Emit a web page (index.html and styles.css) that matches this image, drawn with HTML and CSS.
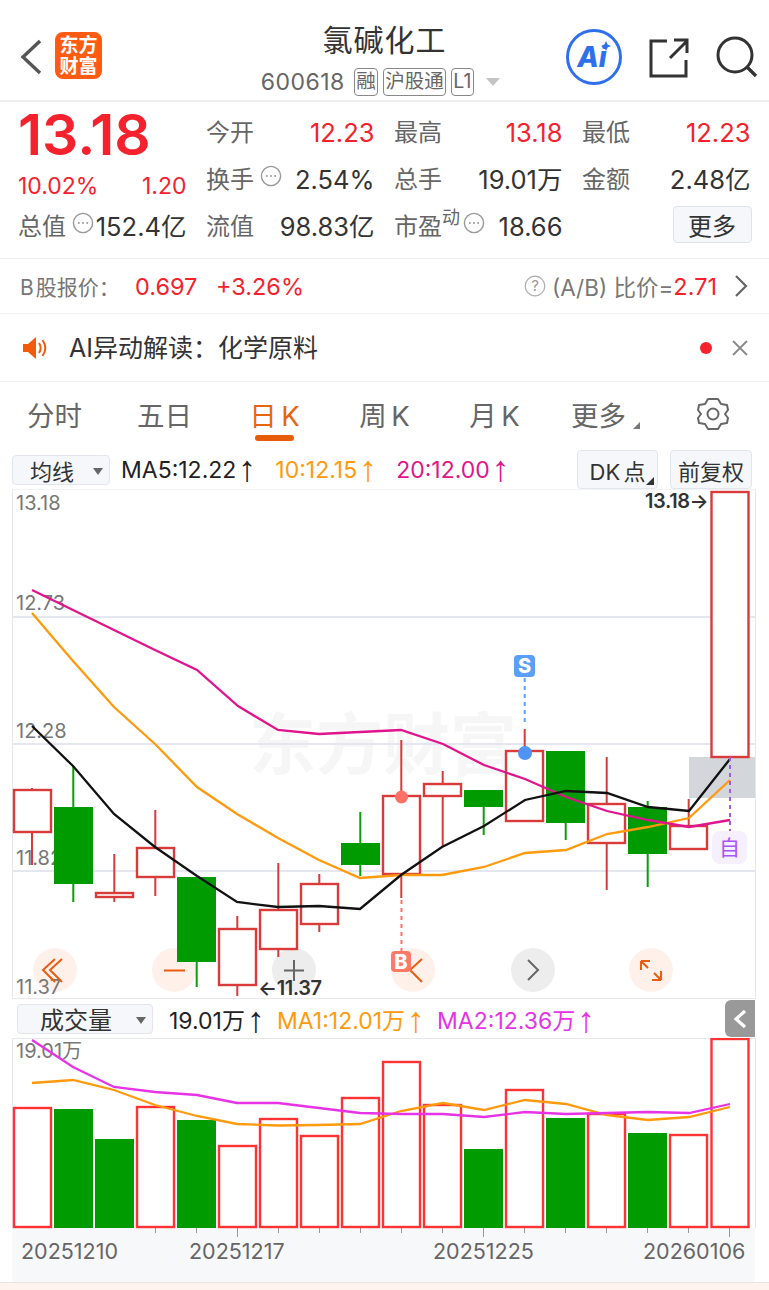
FILE: index.html
```html
<!DOCTYPE html>
<html lang="zh">
<head>
<meta charset="utf-8">
<title>氯碱化工</title>
<link rel="stylesheet" href="styles.css">
</head>
<body>
<svg class="defs" width="0" height="0">
  <symbol id="more" viewBox="0 0 22 22">
    <circle cx="11" cy="11" r="9.6" fill="none" stroke="#999" stroke-width="1.4"/>
    <circle cx="6.8" cy="11" r="1" fill="#999"/><circle cx="11" cy="11" r="1" fill="#999"/><circle cx="15.2" cy="11" r="1" fill="#999"/>
  </symbol>
</svg>
<div class="page">
  <header class="header">
    <div class="header-left">
      <svg class="back" viewBox="0 0 22 36"><path d="M20 2 3 18l17 16" fill="none" stroke="#555" stroke-width="3.4"/></svg>
      <div class="logo"><span>东方</span><span>财富</span></div>
    </div>
    <div class="header-center">
      <div class="title">氯碱化工</div>
      <div class="subtitle">
        <span class="code">600618</span>
        <span class="tag">融</span><span class="tag">沪股通</span><span class="tag">L1</span>
        <span class="caret"></span>
      </div>
    </div>
    <div class="header-right">
      <svg class="ai" viewBox="0 0 58 58">
        <circle cx="29" cy="29" r="26.5" fill="none" stroke="#2f6fee" stroke-width="3"/>
        <text x="27" y="39" class="ai-text">Ai</text>
        <path d="M41 13l1.6 3.4L46 18l-3.4 1.6L41 23l-1.6-3.4L36 18l3.4-1.6z" fill="#2f6fee"/>
      </svg>
      <svg class="share" viewBox="0 0 40 40"><path d="M18 3H2v35h35V22M21 20 38 3M25 2h13v13" fill="none" stroke="#333" stroke-width="3"/></svg>
      <svg class="search" viewBox="0 0 42 42"><circle cx="19" cy="19" r="17" fill="none" stroke="#333" stroke-width="3"/><path d="M31 31l9 9" stroke="#333" stroke-width="3.4"/></svg>
    </div>
  </header>

  <section class="quote">
    <div class="price">13.18</div>
    <div class="cell"><span class="lbl">今开</span><span class="up">12.23</span></div>
    <div class="cell"><span class="lbl">最高</span><span class="up">13.18</span></div>
    <div class="cell"><span class="lbl">最低</span><span class="up">12.23</span></div>
    <div class="cell change"><span class="up">10.02%</span><span class="up">1.20</span></div>
    <div class="cell"><span class="lbl">换手<svg class="more"><use href="#more"/></svg></span><span class="val">2.54%</span></div>
    <div class="cell"><span class="lbl">总手</span><span class="val">19.01万</span></div>
    <div class="cell"><span class="lbl">金额</span><span class="val">2.48亿</span></div>
    <div class="cell"><span class="lbl">总值<svg class="more tight"><use href="#more"/></svg></span><span class="val">152.4亿</span></div>
    <div class="cell"><span class="lbl">流值</span><span class="val">98.83亿</span></div>
    <div class="cell"><span class="lbl">市盈<sup class="dyn">动</sup><svg class="more after-dyn"><use href="#more"/></svg></span><span class="val">18.66</span></div>
    <div class="cell end"><button class="more-btn">更多</button></div>
  </section>

  <section class="bshare">
    <span class="b-label">B 股报价&#xFF1A;</span>
    <span class="up b-price">0.697</span>
    <span class="up b-pct">+3.26%</span>
    <span class="b-right">
      <svg class="help" viewBox="0 0 22 22"><circle cx="11" cy="11" r="9.8" fill="none" stroke="#aaa" stroke-width="1.2"/><text x="11" y="16" class="help-text">?</text></svg>
      <span class="b-ratio">(A/B) 比价=</span><span class="up">2.71</span>
      <svg class="chev" viewBox="0 0 15 24"><path d="M2 2l10 10L2 22" fill="none" stroke="#666" stroke-width="2.2"/></svg>
    </span>
  </section>

  <section class="airow">
    <svg class="speaker" viewBox="0 0 26 24"><path d="M1 8h5l8-7v22l-8-7H1z" fill="#f25a0e"/><path d="M17 7c2 3 2 7 0 10M20.500 4c3.500 5 3.500 11 0 16" fill="none" stroke="#f25a0e" stroke-width="2"/></svg>
    <span class="ai-line">AI异动解读&#xFF1A;化学原料</span>
    <span class="dot"></span>
    <svg class="close" viewBox="0 0 16 16"><path d="M1 1l14 14M15 1 1 15" stroke="#888" stroke-width="1.8"/></svg>
  </section>

  <nav class="tabs">
    <span class="tab">分时</span>
    <span class="tab">五日</span>
    <span class="tab active">日 K</span>
    <span class="tab">周 K</span>
    <span class="tab">月 K</span>
    <span class="tab tab-more">更多</span>
    <span class="tab"><svg class="gear" viewBox="0 0 32 34"><path d="M11 2h10l3 5 6 1 1 5-3 4 3 4-1 5-6 1-3 5H11l-3-5-6-1-1-5 3-4-3-4 1-5 6-1z" fill="none" stroke="#666" stroke-width="2" stroke-linejoin="round"/><circle cx="16" cy="17" r="5.500" fill="none" stroke="#666" stroke-width="2"/></svg></span>
  </nav>

  <div class="mabar">
    <div class="select select-ma"><span>均线</span><i class="down"></i></div>
    <span class="ma black">MA5:12.22<i class="arrow">↑</i></span>
    <span class="ma orange">10:12.15<i class="arrow">↑</i></span>
    <span class="ma pink">20:12.00<i class="arrow">↑</i></span>
    <div class="opt opt-dk">DK 点<i class="corner"></i></div>
    <div class="opt opt-fq">前复权</div>
  </div>

  <svg class="kchart" viewBox="0 489 769 510" width="769" height="510">
    <text x="249" y="769" class="watermark">东方财富</text>
    <path class="frame" d="M12.500 489V998.500H755.500V489H12.500"/>
    <path class="grid" d="M13 617H755M13 744H755M13 871H755"/>
    <rect x="689" y="757" width="66" height="41" fill="#d3d6da"/>
    <g class="circles">
      <circle cx="55" cy="970" r="22" class="c-o"/><circle cx="174" cy="970" r="22" class="c-o"/><circle cx="294" cy="970" r="22" class="c-g"/>
      <circle cx="413" cy="970" r="22" class="c-o"/><circle cx="533" cy="970" r="22" class="c-g"/><circle cx="651" cy="970" r="22" class="c-o"/>
    </g>
    <g class="axis-labels">
      <text x="16" y="510">13.18</text><text x="16" y="610">12.73</text><text x="16" y="738">12.28</text><text x="16" y="865">11.82</text><text x="16" y="994">11.37</text>
    </g>
    <path class="wick-r" d="M32 788V865M114.300 854V902M155.300 810V896M237.300 916V996M278.300 863V957M319.300 874V932M401.300 740V898M442.700 771V847M524.700 729V751M606.700 757V890M688.700 799V826"/>
    <path class="wick-g" d="M73.300 766V902M196.700 877V987M360.300 812V876M483.700 807V835M565.700 823V840M647.700 801V887"/>
    <g class="body-r">
      <rect x="14" y="790" width="37" height="42"/><rect x="96" y="893" width="37" height="4"/><rect x="137" y="848" width="37" height="29"/>
      <rect x="219" y="929" width="37" height="56"/><rect x="260" y="910" width="37" height="39"/><rect x="301" y="884" width="37" height="40"/>
      <rect x="383" y="796" width="37" height="78"/><rect x="424" y="784" width="37" height="12"/><rect x="506" y="751" width="37" height="70"/>
      <rect x="588" y="804" width="37" height="39"/><rect x="670" y="826" width="37" height="23"/><rect x="711.500" y="492" width="37" height="265"/>
    </g>
    <g class="body-g">
      <rect x="54" y="807" width="39" height="77"/><rect x="177" y="877" width="39" height="85"/><rect x="341" y="843" width="39" height="22"/>
      <rect x="464" y="790" width="39" height="17"/><rect x="546" y="751" width="39" height="72"/><rect x="628" y="807" width="39" height="47"/>
    </g>
    <polyline class="l-orange" points="32,613 73,661 114,707 155,744 197,787 237,814 278,838 319,860 360,878 401,875 442,875 484,867 525,853 566,850 607,834 648,827 689,818 730,780"/>
    <polyline class="l-pink" points="32,590 73,610 114,630 155,650 197,670 238,706 278,730 319,734 360,732 401,730 443,744 484,765 525,779 566,797 607,811 648,820 689,827 730,820"/>
    <polyline class="l-black" points="32,726 73,766 114,814 155,847 197,876 237,902 278,907 319,906 360,909 401,875 442,847 484,826 525,800 566,791 607,793 648,807 689,811 730,759"/>
    <g class="btn-icons">
      <path class="i-o" d="M62 959 50 970l12 12M55 959 43 970l12 12M164 970.500h21M422 959l-12 11 12 12"/>
      <path class="i-g" d="M284 970.500h20M294 960v21M528 960l10 10-10 10"/>
      <path class="i-o" d="M641 961h9M641 961v9M641 961l7 7M661 980h-9M661 980v-9M661 980l-7-7"/>
    </g>
    <path class="dash-red" d="M401.500 900V952"/>
    <path class="dash-blue" d="M524.700 678V722"/>
    <path class="dash-purple" d="M730 757V832"/>
    <circle cx="401.500" cy="797" r="6.500" fill="#ff7066"/>
    <circle cx="525" cy="753" r="7" fill="#4f94f5"/>
    <rect x="391" y="951" width="20" height="21" rx="4" fill="#ff7a66"/><text x="401" y="969" class="mark">B</text>
    <rect x="514" y="655" width="21" height="22" rx="4" fill="#5a9ffa"/><text x="524.500" y="673" class="mark">S</text>
    <rect x="712" y="831" width="35" height="33" rx="8" fill="#f5effe"/><text x="729.500" y="855" class="self">自</text>
    <text x="645" y="508" class="hl">13.18→</text>
    <text x="258" y="995" class="hl">←11.37</text>
  </svg>

  <div class="volbar">
    <div class="select select-vol"><span>成交量</span><i class="down"></i></div>
    <span class="ma black">19.01万<i class="arrow">↑</i></span>
    <span class="ma orange">MA1:12.01万<i class="arrow">↑</i></span>
    <span class="ma magenta">MA2:12.36万<i class="arrow">↑</i></span>
    <div class="collapse"><svg viewBox="0 0 14 20"><path d="M12 2 3 10l9 8" fill="none" stroke="#fff" stroke-width="3.200"/></svg></div>
  </div>

  <svg class="volchart" viewBox="0 1038 769 244" width="769" height="244">
    <rect x="12" y="1228" width="743" height="54" fill="#f7f8fa"/>
    <path class="frame" d="M12.500 1228V1038.500H755.500V1228"/>
    <path class="tick" d="M155.500 1228v5M196.500 1228v5M237.500 1228v9M278.500 1228v5M319.500 1228v5M360.500 1228v5M401.500 1228v5M442.500 1228v5M483.500 1228v9M524.500 1228v5M565.500 1228v5M606.500 1228v5M647.500 1228v5M688.500 1228v5M729.500 1228v9"/>
    <g class="vol-r">
      <rect x="14" y="1108" width="37" height="119"/><rect x="137" y="1107" width="37" height="120"/><rect x="219" y="1146" width="37" height="81"/>
      <rect x="260" y="1119" width="37" height="108"/><rect x="301" y="1136" width="37" height="91"/><rect x="342" y="1098" width="37" height="129"/>
      <rect x="383" y="1062" width="37" height="165"/><rect x="424" y="1105" width="37" height="122"/><rect x="506" y="1090" width="37" height="137"/>
      <rect x="588" y="1114" width="37" height="113"/><rect x="670" y="1135" width="37" height="92"/><rect x="711.500" y="1039" width="37" height="188"/>
    </g>
    <g class="body-g">
      <rect x="54" y="1109" width="39" height="119"/><rect x="95" y="1139" width="39" height="89"/><rect x="177" y="1120" width="39" height="108"/>
      <rect x="464" y="1149" width="39" height="79"/><rect x="546" y="1118" width="39" height="110"/><rect x="628" y="1133" width="39" height="95"/>
    </g>
    <text x="16" y="1058" class="vol-label">19.01万</text>
    <polyline class="l-orange" points="32,1083 73,1080 114,1090 155,1105 197,1116 237,1124 278,1125.500 319,1125 360,1124 401,1111 443,1103 484,1110 525,1100 566,1104 607,1115 648,1120 689,1117 730,1107"/>
    <polyline class="l-magenta" points="32,1040 73,1067 114,1087 155,1092 197,1095 237,1103 278,1103 319,1108 360,1113 401,1114 443,1114 484,1117 525,1112 566,1114 607,1113 648,1112 689,1113 730,1104"/>
    <g class="dates">
      <text x="21" y="1259">20251210</text><text x="189" y="1259">20251217</text><text x="433" y="1259">20251225</text><text x="643" y="1259">20260106</text>
    </g>
  </svg>
  <div class="foot"></div>
</div>
</body>
</html>
```
FILE: styles.css
```css
* { box-sizing: border-box; }
html, body { margin: 0; padding: 0; background: #fff; }
body { font-family: Inter, "Noto Sans CJK SC", sans-serif; color: #333; overflow: hidden; }
.defs { position: absolute; }
.page { width: 769px; height: 1290px; overflow: hidden; }
svg { display: block; }

.header { height: 102px; display: grid; grid-template-columns: 1fr auto 1fr; border-bottom: 2px solid #eee; }
.header-left { display: flex; align-items: flex-start; padding: 39px 0 0 20px; gap: 13px; }
.back { width: 22px; height: 36px; }
.logo { width: 47px; height: 47px; margin-top: -7px; border-radius: 8px; background: #ff5b12; color: #fff; font-size: 19px; font-weight: 700; line-height: 21px; display: flex; flex-direction: column; align-items: center; justify-content: center; }
.header-center { display: flex; flex-direction: column; align-items: center; padding-top: 20px; }
.title { font-size: 30px; line-height: 40px; color: #333; letter-spacing: 1px; }
.subtitle { display: flex; align-items: center; margin-top: 7px; height: 30px; padding-right: 8px; }
.code { font-size: 23px; color: #666; margin-right: 9px; letter-spacing: .5px; }
.tag { height: 28px; padding: 0 1.500px; margin-right: 4.500px; border: 1px solid #888; border-radius: 4px; font-size: 19.500px; line-height: 25px; color: #666; }
.caret { width: 0; height: 0; margin-left: 8px; border: 7px solid transparent; border-top: 8px solid #c4c4c4; border-bottom: 0; }
.header-right { display: flex; align-items: flex-start; justify-content: flex-end; padding: 28px 11px 0 0; }
.ai { width: 58px; height: 58px; }
.ai-text { font-family: Inter, sans-serif; font-size: 28px; font-weight: 800; font-style: italic; fill: #2f6fee; text-anchor: middle; }
.share { width: 40px; height: 40px; margin: 10px 0 0 26px; }
.search { width: 42px; height: 42px; margin: 8px 0 0 27px; }

.quote { height: 157px; padding: 7px 0 0 18px; display: grid; grid-template-columns: repeat(4, 168.500px); grid-auto-rows: 47px; column-gap: 19.500px; border-bottom: 1px solid #eee; }
.price { font-size: 57px; line-height: 47px; padding-top: 2px; font-weight: 600; color: #f5222d; white-space: nowrap; }
.cell { display: flex; justify-content: space-between; align-items: center; font-size: 25.500px; line-height: 30px; }
.cell.change { font-size: 23px; padding-top: 13px; }
.cell.end { justify-content: flex-end; }
.lbl { color: #666; display: flex; align-items: flex-start; font-size: 24px; }
.val { color: #333; white-space: nowrap; height: 30px; }
.up { color: #f5222d; }
.more { width: 22px; height: 22px; margin: 0 0 0 6px; flex: none; }
.more.tight { margin-right: -8px; }
.dyn { font-size: 18px; line-height: 18px; margin: -3px 0 0 0; vertical-align: baseline; }
.more.after-dyn { margin: 0 0 0 3px; }
.more-btn { width: 79px; height: 37px; margin: -5px -1px 0 0; border: 1px solid #dfe3e8; border-radius: 4px; background: #f5f7fa; color: #333; font-family: inherit; font-size: 24px; padding: 0; }

.bshare { height: 55px; display: flex; align-items: center; padding: 0 20px; font-size: 23.500px; border-bottom: 1px solid #f0f0f0; }
.b-label { color: #777; width: 115px; white-space: nowrap; font-size: 21px; word-spacing: -4px; }
.b-price { width: 81px; }
.b-right { margin-left: auto; display: flex; align-items: center; color: #777; }
.help { width: 22px; height: 22px; margin-right: 6px; }
.help-text { font-size: 15px; fill: #999; text-anchor: middle; }
.chev { width: 15px; height: 24px; margin-left: 17px; }
.b-ratio { white-space: nowrap; font-size: 22.500px; }

.airow { height: 68px; display: flex; align-items: center; padding: 0 21px 0 22px; font-size: 25px; color: #333; border-bottom: 1px solid #f0f0f0; }
.speaker { width: 26px; height: 24px; }
.ai-line { margin-left: 21px; padding-bottom: 3px; white-space: nowrap; }
.dot { width: 12px; height: 12px; margin-left: auto; border-radius: 50%; background: #f5222d; }
.close { width: 16px; height: 16px; margin-left: 20px; }

.tabs { height: 68px; padding-bottom: 4px; display: grid; grid-template-columns: repeat(7, 110px); align-items: center; font-size: 27.500px; color: #666; }
.tab { position: relative; display: flex; justify-content: center; white-space: nowrap; word-spacing: -3px; margin-left: -1px; }
.tab.active { color: #e8650f; }
.tab.active::after { content: ""; position: absolute; left: 36px; width: 39px; height: 6px; bottom: -7px; border-radius: 3px; background: #e65c0a; }
.tab-more { padding-right: 12px; }
.tab-more::after { content: ""; position: absolute; right: 20px; bottom: 5px; border-left: 7px solid transparent; border-bottom: 7px solid #777; }
.gear { width: 32px; height: 34px; margin: 0 3px 0 0; }

.mabar { height: 39px; display: flex; align-items: center; position: relative; padding-left: 12px; font-size: 23px; }
.select { position: relative; display: flex; align-items: center; height: 30px; border: 1px solid #e2e6ec; border-radius: 4px; background: #f5f7fa; color: #333; }
.select-ma { width: 98px; padding-left: 17px; font-size: 22px; }
.select-vol { width: 136px; padding-left: 22px; font-size: 24px; }
.down { position: absolute; right: 6px; top: 12px; border: 5px solid transparent; border-top: 7px solid #666; border-bottom: 0; }
.ma { white-space: nowrap; margin-left: 19px; }
.arrow { font-family: "Liberation Sans", sans-serif; font-style: normal; font-size: 36px; line-height: 0; margin-left: 2px; vertical-align: -3px; }
.select + .ma { margin-left: 11px; }
.black { color: #222; }
.orange { color: #ff9a0d; }
.pink { color: #e0148c; }
.magenta { color: #e633e6; }
.opt { position: absolute; top: 0; height: 39px; border: 1px solid #e2e6ec; border-radius: 4px; background: #f5f7fa; color: #333; display: flex; align-items: center; justify-content: center; font-size: 22px; white-space: nowrap; word-spacing: -3px; }
.opt-dk { left: 577px; width: 81px; }
.opt-fq { left: 670px; width: 82px; }
.corner { position: absolute; right: 3px; bottom: 3px; border-left: 8px solid transparent; border-bottom: 8px solid #333; }

.kchart, .volchart { display: block; }
.watermark { font-size: 67px; font-weight: 700; fill: #f6f6f6; }
.frame { fill: none; stroke: #e6e8ee; stroke-width: 1; }
.grid { stroke: #e4e7f0; stroke-width: 2; fill: none; }
.c-o { fill: #fff1ea; }
.c-g { fill: #ededed; }
.axis-labels text, .vol-label { font-size: 20px; fill: #777; }
.wick-r { stroke: #d93a3a; stroke-width: 2; fill: none; }
.wick-g { stroke: #0a9e0a; stroke-width: 2; fill: none; }
.body-r rect { fill: #fff; stroke: #d93a3a; stroke-width: 2.400; }
.body-g rect { fill: #009b00; stroke: none; }
.l-orange, .l-pink, .l-black, .l-magenta { fill: none; stroke-width: 2.300; }
.l-orange { stroke: #ff9a0d; }
.l-pink { stroke: #e0148c; }
.l-black { stroke: #111; }
.l-magenta { stroke: #e633e6; }
.i-o { fill: none; stroke: #ea5c10; stroke-width: 2; }
.i-g { fill: none; stroke: #666; stroke-width: 2; }
.dash-red, .dash-blue, .dash-purple { fill: none; stroke-width: 2; stroke-dasharray: 4 4; }
.dash-red { stroke: #ff7066; }
.dash-blue { stroke: #5a9ffa; }
.dash-purple { stroke: #a855f7; }
.mark { font-size: 20px; font-weight: 800; fill: #fff; text-anchor: middle; }
.self { font-size: 21px; fill: #a855f7; text-anchor: middle; }
.hl { font-size: 20px; font-weight: 600; fill: #333; letter-spacing: -.4px; }

.volbar { height: 39px; position: relative; display: flex; align-items: center; padding-left: 17px; font-size: 23px; }
.volbar .ma { margin-left: 12px; }
.volbar .select + .ma { margin-left: 16px; }
.collapse { position: absolute; left: 725px; top: 1px; width: 30px; height: 37px; border-radius: 6px 0 0 6px; background: #999; display: flex; align-items: center; justify-content: center; }
.collapse svg { width: 14px; height: 20px; }

.tick { stroke: #999; stroke-width: 1; fill: none; }
.vol-r rect { fill: #fff; stroke: #ff3333; stroke-width: 2.400; }
.dates text { font-size: 21.500px; fill: #666; }
.foot { height: 8px; background: #fff3ee; border-top: 1px solid #e5e5e5; }
```
